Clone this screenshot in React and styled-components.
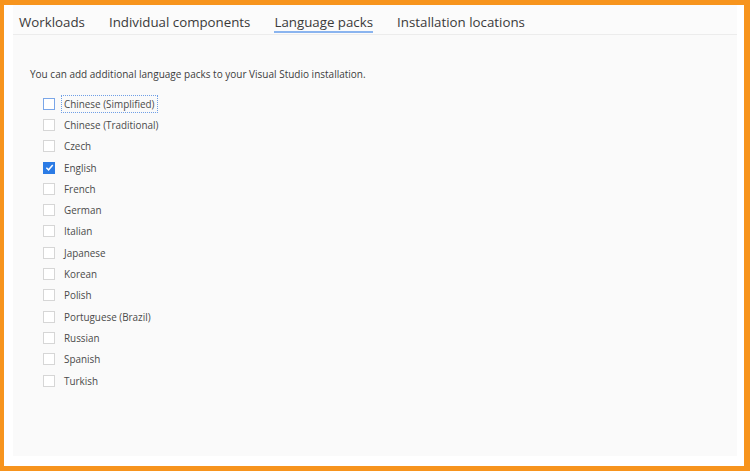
import React from "react"
import styled, { createGlobalStyle } from "styled-components"

const GlobalStyle = createGlobalStyle`
  html, body {
    margin: 0;
    padding: 0;
    background: #f7941d;
  }
  body {
    font-family: "Open Sans", "Noto Sans", "Liberation Sans", sans-serif;
  }
`

const Frame = styled.div`
  width: 750px;
  height: 471px;
  box-sizing: border-box;
  padding: 5px 6px 5px 4px;
  background: #f7941d;
`

const Sheet = styled.div`
  height: 100%;
  box-sizing: border-box;
  background: #ffffff;
  padding: 0 7px 10px 9px;
  display: flex;
`

const Panel = styled.div`
  flex: 1;
  background: #fafafa;
  display: flex;
  flex-direction: column;
`

const TabBar = styled.div`
  display: flex;
  gap: 24px;
  padding: 0 0 0 6px;
  height: 29px;
  border-bottom: 1px solid #ececec;
  background: #fbfbfb;
`

const Tab = styled.div`
  font-size: 13.3px;
  color: #3a3a3a;
  padding-top: 8px;
  height: 100%;
  box-sizing: border-box;
  position: relative;
  white-space: nowrap;
  &::after {
    content: "";
    display: ${(p) => (p.$active ? "block" : "none")};
    position: absolute;
    left: 0;
    right: 0;
    bottom: 1px;
    height: 2px;
    background: #8ab4ef;
  }
`

const Content = styled.div`
  padding: 32px 0 0 17px;
`

const Intro = styled.p`
  margin: 0 0 12px;
  font-size: 10px;
  color: #3c3c3c;
`

const List = styled.div`
  display: flex;
  flex-direction: column;
  padding-left: 13px;
`

const Row = styled.label`
  display: flex;
  align-items: center;
  height: 21.3px;
  gap: 6px;
  font-size: 9.9px;
  color: #4a4a4a;
`

const Box = styled.span`
  width: 12px;
  height: 12px;
  box-sizing: border-box;
  border: 1px solid ${(p) => (p.$checked ? "#2b7be5" : p.$focus ? "#7aa6e8" : "#d6d6d6")};
  background: ${(p) => (p.$checked ? "#2b7be5" : "#ffffff")};
  display: flex;
  align-items: center;
  justify-content: center;
`

const Label = styled.span`
  padding: 1px 2px;
  border: 1px dotted ${(p) => (p.$focus ? "#6f9fe6" : "transparent")};
`

const languages = [
  "Chinese (Simplified)",
  "Chinese (Traditional)",
  "Czech",
  "English",
  "French",
  "German",
  "Italian",
  "Japanese",
  "Korean",
  "Polish",
  "Portuguese (Brazil)",
  "Russian",
  "Spanish",
  "Turkish",
]

const tabs = ["Workloads", "Individual components", "Language packs", "Installation locations"]

export default function App() {
  return (
    <>
      <GlobalStyle />
      <Frame>
        <Sheet>
          <Panel>
            <TabBar>
              {tabs.map((t) => (
                <Tab key={t} $active={t === "Language packs"}>
                  {t}
                </Tab>
              ))}
            </TabBar>
            <Content>
              <Intro>You can add additional language packs to your Visual Studio installation.</Intro>
              <List>
                {languages.map((l, i) => {
                  const checked = l === "English"
                  const focus = i === 0
                  return (
                    <Row key={l}>
                      <Box $checked={checked} $focus={focus}>
                        {checked && (
                          <svg width="9" height="9" viewBox="0 0 10 10">
                            <path d="M1.5 5.2 L4 7.6 L8.6 2.2" fill="none" stroke="#fff" strokeWidth="1.6" />
                          </svg>
                        )}
                      </Box>
                      <Label $focus={focus}>{l}</Label>
                    </Row>
                  )
                })}
              </List>
            </Content>
          </Panel>
        </Sheet>
      </Frame>
    </>
  )
}
